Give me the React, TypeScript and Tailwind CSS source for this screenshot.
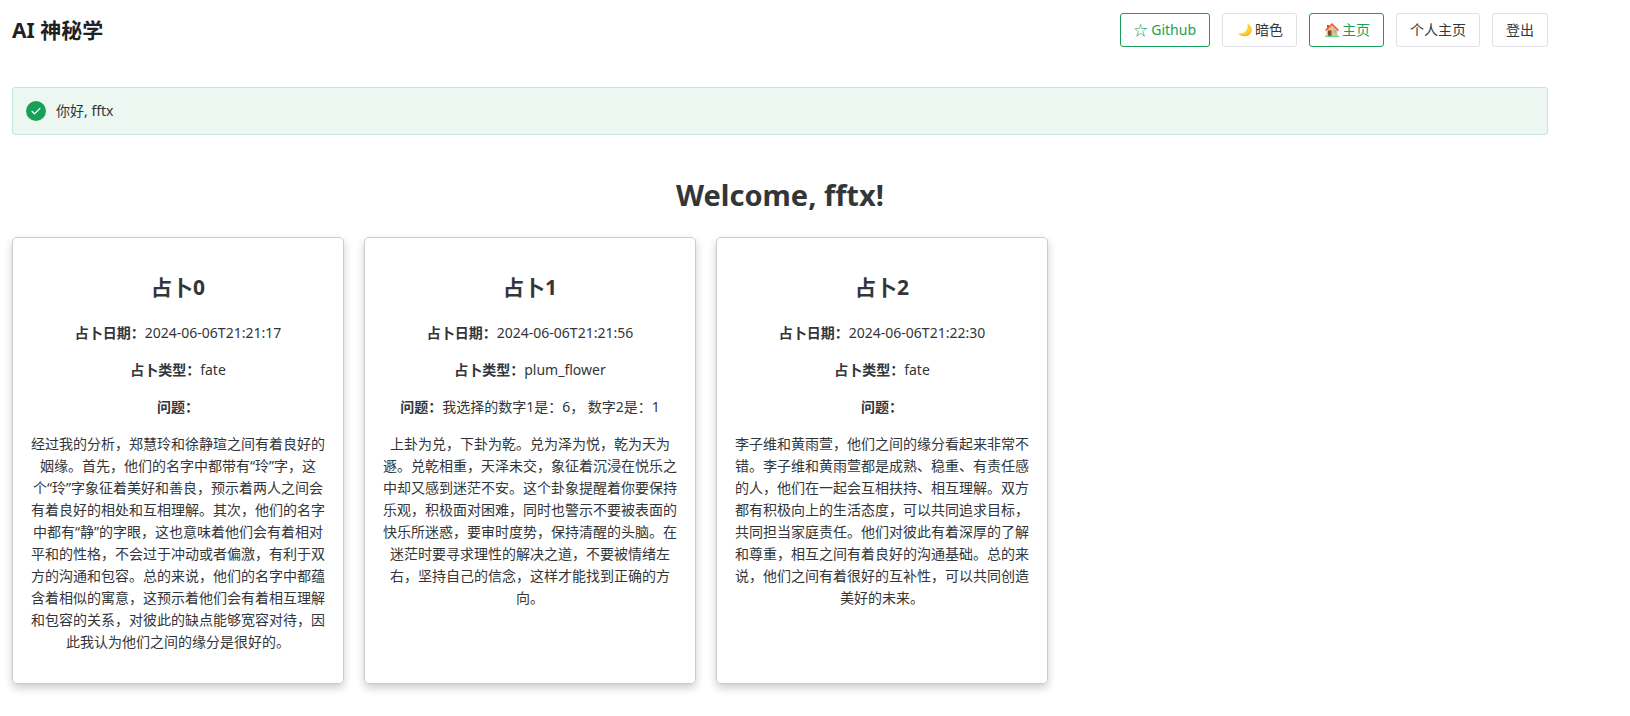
type Reading = {
  title: string;
  date: string;
  kind: string;
  question: string;
  answer: string;
};

const readings: Reading[] = [
  {
    title: "占卜0",
    date: "2024-06-06T21:21:17",
    kind: "fate",
    question: "",
    answer:
      "经过我的分析，郑慧玲和徐静瑄之间有着良好的姻缘。首先，他们的名字中都带有“玲”字，这个“玲”字象征着美好和善良，预示着两人之间会有着良好的相处和互相理解。其次，他们的名字中都有“静”的字眼，这也意味着他们会有着相对平和的性格，不会过于冲动或者偏激，有利于双方的沟通和包容。总的来说，他们的名字中都蕴含着相似的寓意，这预示着他们会有着相互理解和包容的关系，对彼此的缺点能够宽容对待，因此我认为他们之间的缘分是很好的。",
  },
  {
    title: "占卜1",
    date: "2024-06-06T21:21:56",
    kind: "plum_flower",
    question: "我选择的数字1是：6， 数字2是：1",
    answer:
      "上卦为兑，下卦为乾。兑为泽为悦，乾为天为遯。兑乾相重，天泽未交，象征着沉浸在悦乐之中却又感到迷茫不安。这个卦象提醒着你要保持乐观，积极面对困难，同时也警示不要被表面的快乐所迷惑，要审时度势，保持清醒的头脑。在迷茫时要寻求理性的解决之道，不要被情绪左右，坚持自己的信念，这样才能找到正确的方向。",
  },
  {
    title: "占卜2",
    date: "2024-06-06T21:22:30",
    kind: "fate",
    question: "",
    answer:
      "李子维和黄雨萱，他们之间的缘分看起来非常不错。李子维和黄雨萱都是成熟、稳重、有责任感的人，他们在一起会互相扶持、相互理解。双方都有积极向上的生活态度，可以共同追求目标，共同担当家庭责任。他们对彼此有着深厚的了解和尊重，相互之间有着良好的沟通基础。总的来说，他们之间有着很好的互补性，可以共同创造美好的未来。",
  },
];

const buttonBase =
  "flex h-[34px] items-center whitespace-nowrap rounded-[3px] border px-[13px] text-sm";
const plain = `${buttonBase} border-[#e0e0e6] text-[#333639]`;
const primary = `${buttonBase} border-[#18a058] text-[#18a058]`;

function MoonIcon() {
  return (
    <svg viewBox="0 0 14 14" className="ml-0.5 mr-[3px] size-3.5" aria-hidden="true">
      <path
        d="M9.200.5C13.400 2 14.800 6.400 12.700 9.900 10.300 13.900 3.400 14.400.4 10.200c3.500.5 6.900-.7 8.400-3.500C9.900 4.600 10 2.500 9.200.5Z"
        fill="#fdd033"
      />
      <path d="M.4 10.200c3 2.200 8.300 2.200 11.900-1.700 1-1.100 1.300-2.300 1.300-3.400.5 1.800 0 3.400-.9 4.800C10.300 13.900 3.400 14.400.4 10.200Z" fill="#f5b82e" />
    </svg>
  );
}

function HouseIcon() {
  return (
    <svg viewBox="0 0 14 14" className="ml-0.5 mr-[3px] size-3.5" aria-hidden="true">
      <path d="M2 2h2v4H2z" fill="#b4553c" />
      <path d="M1.500 6.500 7 1l5.500 5.500V13h-11z" fill="#f5bd7b" />
      <path d="M0 7 7 0l7 7-1 1-6-6-6 6z" fill="#ee4f43" />
      <path d="M3 7.500h3.500V13H3z" fill="#7d4b36" />
      <path d="M8.300 7h3v3h-3z" fill="#7cc6f5" />
      <path d="M0 12.700h14V14H0z" fill="#5fd69b" />
    </svg>
  );
}

function Header() {
  return (
    <header className="flex flex-wrap items-center justify-between gap-3 pt-[13px]">
      <h2 className="text-[21px] font-bold leading-[34px] text-[#1f2225]">AI 神秘学</h2>
      <nav className="flex flex-wrap gap-3">
        <a href="#github" className={primary}>
          ☆ Github
        </a>
        <button type="button" className={plain}>
          <MoonIcon />
          暗色
        </button>
        <button type="button" className={primary}>
          <HouseIcon />
          主页
        </button>
        <button type="button" className={plain}>
          个人主页
        </button>
        <button type="button" className={plain}>
          登出
        </button>
      </nav>
    </header>
  );
}

function Greeting() {
  return (
    <div
      role="status"
      className="mt-10 flex h-12 items-center gap-2.5 rounded-[3px] border border-[#c5e7d5] bg-[#edf7f2] px-[13px] text-sm text-[#333639]"
    >
      <svg viewBox="0 0 20 20" className="size-5" aria-hidden="true">
        <circle cx="10" cy="10" r="10" fill="#18a058" />
        <path d="m6 10.300 2.600 2.500 5.400-5.400" fill="none" stroke="#fff" strokeWidth="1.200" strokeLinecap="round" strokeLinejoin="round" />
      </svg>
      <span>你好, fftx</span>
    </div>
  );
}

function ReadingCard({ reading }: { reading: Reading }) {
  return (
    <article className="flex w-[332px] flex-col gap-[15px] rounded-[5px] border border-[#cccccc] px-[15px] pb-[30px] pt-8 text-center text-sm leading-[22px] shadow-[0_4px_8px_rgba(0,0,0,0.2)]">
      <h2 className="mb-[3px] text-[21px] font-bold leading-[34px]">{reading.title}</h2>
      <p>
        <strong>占卜日期：</strong>
        {reading.date}
      </p>
      <p>
        <strong>占卜类型：</strong>
        {reading.kind}
      </p>
      <p>
        <strong>问题：</strong>
        {reading.question}
      </p>
      <p>{reading.answer}</p>
    </article>
  );
}

export default function App() {
  return (
    <div
      lang="en"
      className="bg-white pb-8 pl-3 pr-[82px] font-['Noto_Sans','Noto_Sans_CJK_SC',sans-serif] text-[#333639]"
    >
      <Header />
      <Greeting />
      <main>
        <h1 className="mb-5 mt-[38px] text-center text-[29px] font-bold leading-[44px]">Welcome, fftx!</h1>
        <section className="flex flex-wrap gap-5">
          {readings.map((reading) => (
            <ReadingCard key={reading.title} reading={reading} />
          ))}
        </section>
      </main>
    </div>
  );
}
